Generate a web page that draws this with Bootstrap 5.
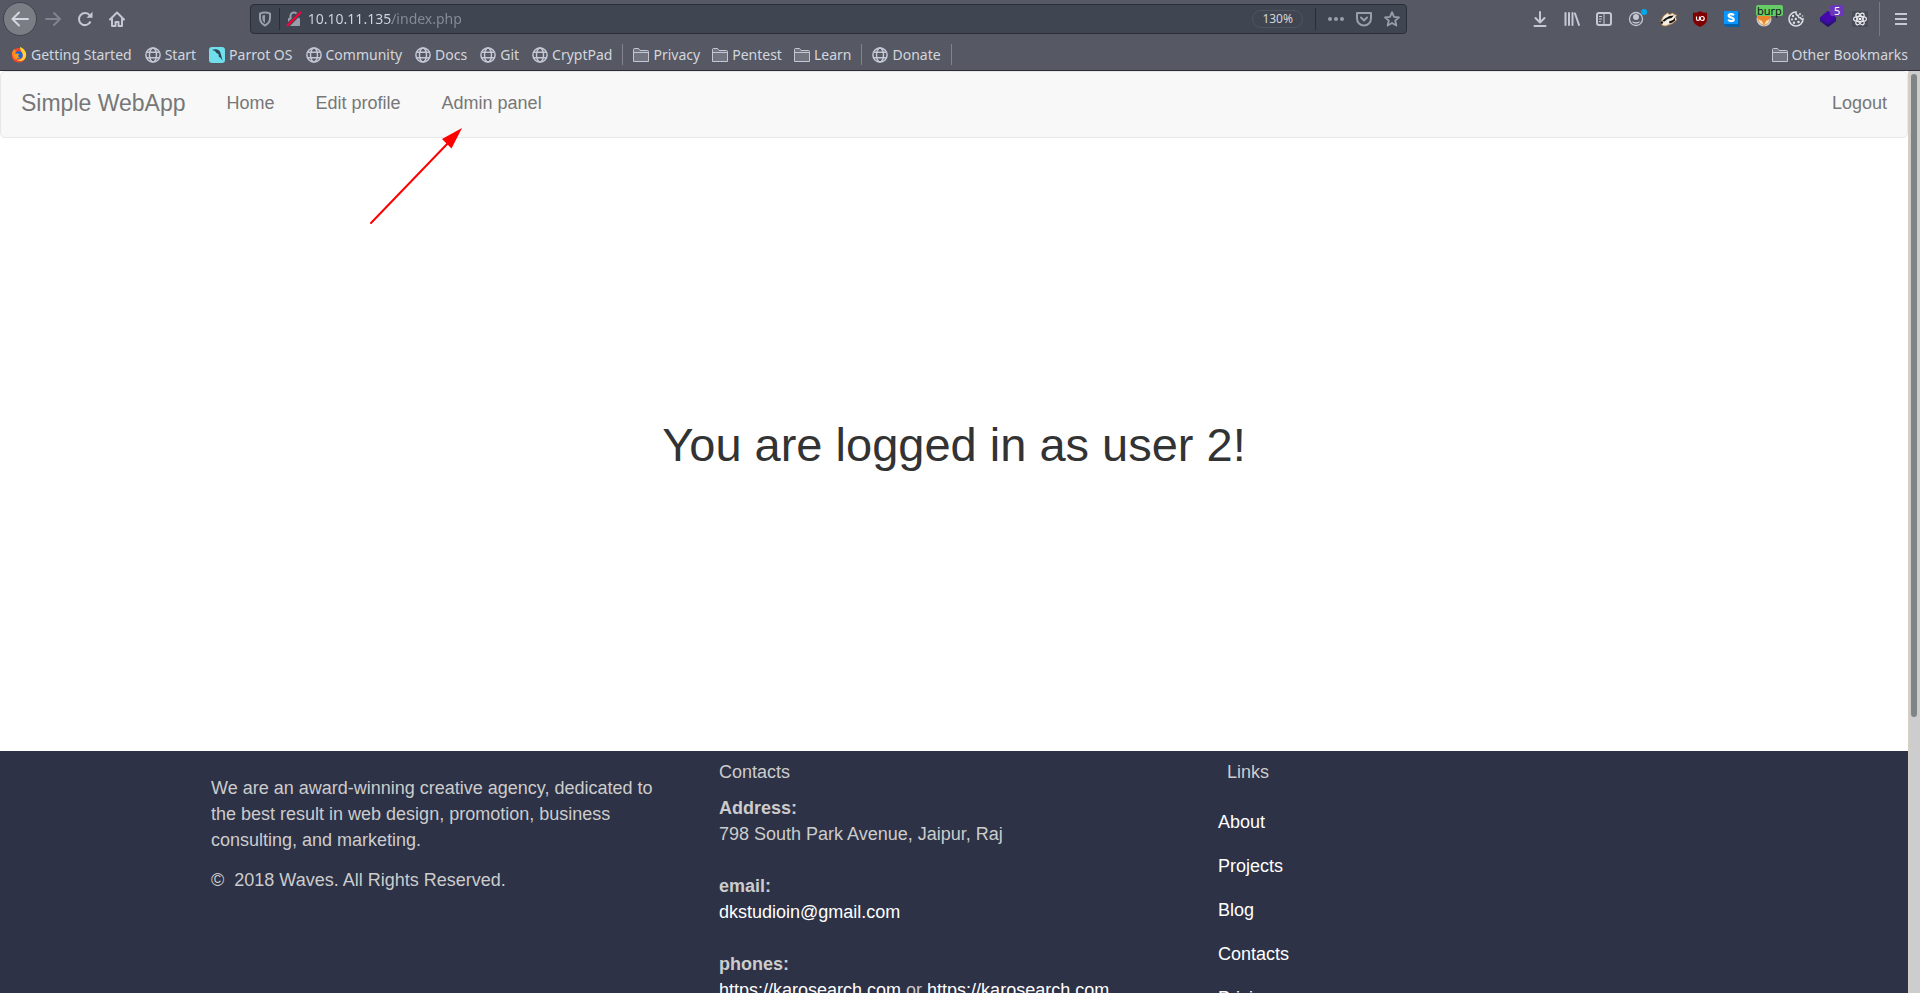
<!DOCTYPE html>
<html lang="en">
<head>
<meta charset="utf-8">
<meta name="viewport" content="width=device-width, initial-scale=1">
<title>Simple WebApp</title>
<link href="https://cdn.jsdelivr.net/npm/bootstrap@5.3.0/dist/css/bootstrap.min.css" rel="stylesheet">
<style>
  body { font-family: "Liberation Sans", Arial, sans-serif; font-size: 18px; line-height: 26px; color: #333; }
  a { text-decoration: none; }
  svg { display: block; flex: none; }

  /* browser toolbar */
  .chrome { background: #565964; border-bottom: 1px solid #2b2e39; font-family: "Noto Sans", sans-serif; font-size: 14px; line-height: 20px; color: #d3d6de; }
  .toolbar-row { height: 39px; padding: 0 3px 1px; }
  .tool { width: 32px; height: 32px; padding: 0; border: 0; background: none; color: #c4c8d4; display: flex; align-items: center; justify-content: center; position: relative; flex: none; }
  .tool-back { width: 34px; height: 34px; background: #7b7d85; border: 1px solid #41444e; border-radius: 50%; }
  .tool-off { color: #81848e; }
  .gap-flex { flex: 117 1 0; }
  .urlbar { flex: 1157 1 0; height: 30px; min-width: 0; background: #404552; border: 1px solid #2b2e39; border-radius: 4px; color: #9a9eaa; }
  .urlbar .tool { width: 28px; height: 28px; color: #9a9eaa; }
  .url-sep { width: 1px; height: 22px; background: #2b2e39; }
  .url-sep-end { margin: 0 6px 0 12px; }
  .url-input { font-size: 14px; border: 0; padding: 0; outline: 0; min-width: 0; color: transparent; background: linear-gradient(to right, #d3dae3 84px, #888c98 84px); -webkit-background-clip: text; background-clip: text; }
  .zoom-pill { font-size: 12px; line-height: 16px; color: #d3d6de; background: none; border: 1px solid #505461; border-radius: 9px; width: 51px; padding: 0; }
  .tag { position: absolute; font-size: 11px; line-height: 11px; border-radius: 2px; }
  .tag-burp { left: 8px; top: 2px; background: #66cc66; color: #111; padding: 0 1px; }
  .tag-five { left: 18px; top: 2px; background: #6c36b8; color: #fff; padding: 0 4px; }
  .menu-sep { width: 1px; height: 34px; background: #777a84; margin: 0 5px 0 3px; }
  .bookmarks { height: 31px; padding: 0 12px 0 11px; gap: 13px; }
  .bookmarks a { color: #d3d6de; display: flex; align-items: center; gap: 4px; white-space: nowrap; }
  .folders { display: flex; gap: 12px; }
  .mark-sep { width: 1px; height: 21px; background: #81848e; margin: 0 -3px; }

  /* page */
  .viewport-scroll { width: 12px; background: #cdcdcd; border-left: 1px solid #d8cfc4; padding: 3px 3px 0 2px; }
  .thumb { height: 70%; background: #7f8584; border-radius: 3px; }
  .app-nav { background: #f8f8f8; border: 1px solid #e7e7e7; border-radius: 5px; height: 67px; padding: 18px 20px; gap: 41px; align-items: flex-start; }
  .app-nav a { color: #777; }
  .app-nav .app-title { font-size: 23px; }
  .hero { padding: 280px 20px; }
  .hero h1 { font-size: 47px; line-height: 53px; font-weight: 400; margin: 0; color: #333; }
  .app-footer { background: #2d3246; color: #ccc; flex: 1 0 auto; }
  .app-footer a { color: #fff; }
  .foot-wrap { max-width: 1524px; margin: 0 auto; padding: 0; }
  .foot-row { --bs-gutter-x: 38px; margin: 0; }
  .about-col { padding-top: 24px; }
  .about-col p { margin: 0 0 14px; }
  .list-col { padding-top: 8px; }
  .list-col h2 { font-size: 18px; line-height: 26px; font-weight: 400; margin: 0 0 10px; }
  .list-col dl, .list-col dt, .list-col dd { margin: 0; }
  .list-col dd { margin-bottom: 26px; }
  .link-list { margin: 24px 0 0 -9px; padding: 0; list-style: none; display: grid; gap: 18px; }
  .pointer { position: absolute; left: 368px; top: 56px; }
</style>
</head>
<body>
<svg width="0" height="0" class="position-absolute" aria-hidden="true">
  <symbol id="globe" viewBox="0 0 16 16"><g fill="none" stroke="#c4c8d4" stroke-width="1.5"><circle cx="8" cy="8" r="7.1"/><ellipse cx="8" cy="8" rx="3.5" ry="7"/><path d="M1.8 5.3h12.4M1.8 10.7h12.4"/></g></symbol>
  <symbol id="folder" viewBox="0 0 16 16"><path d="M.5 14.5v-12q0-1 1-1h4l1.500 2h7.500q1 0 1 1v10z" fill="#72757f" stroke="#c4c8d4"/><path d="M.5 5.500h15" stroke="#c4c8d4"/></symbol>
</svg>
<div class="vh-100 d-flex flex-column overflow-hidden">
  <header class="chrome flex-shrink-0">
    <div class="toolbar-row d-flex align-items-center">
      <button class="tool tool-back" aria-label="Back"><svg width="18" height="18" viewBox="0 0 18 18" fill="none" stroke="#d3d7e0" stroke-width="2" stroke-linecap="round" stroke-linejoin="round"><path d="M17 9H2M8 2.500L1.500 9 8 15.500"/></svg></button>
      <button class="tool tool-off" aria-label="Forward"><svg width="16" height="16" viewBox="0 0 16 16" fill="none" stroke="currentColor" stroke-width="2" stroke-linecap="round" stroke-linejoin="round"><path d="M1 8h13M9 2l6 6-6 6"/></svg></button>
      <button class="tool" aria-label="Reload"><svg width="16" height="16" viewBox="0 0 16 16" fill="none" stroke="currentColor" stroke-width="2"><path d="M12.800 4.500A6 6 0 1 0 13.500 10.500"/><path d="M15.500 .8v6h-6z" fill="currentColor" stroke="none"/></svg></button>
      <button class="tool" aria-label="Home"><svg width="16" height="16" viewBox="0 0 16 16" fill="none" stroke="currentColor" stroke-width="2" stroke-linecap="round" stroke-linejoin="round"><path d="M1 8.500L8 1.500l7 7M3 8v7h3.500v-4h3v4H13V8"/></svg></button>
      <div class="gap-flex"></div>
      <div class="urlbar d-flex align-items-center">
        <button class="tool" aria-label="Tracking protection"><svg width="14" height="16" viewBox="0 0 14 16"><path d="M7 1.500c2 0 3.500.4 5 1.200V7c0 3.500-2 6-5 7.500C4 13 2 10.500 2 7V2.700C3.500 1.900 5 1.500 7 1.500z" fill="none" stroke="currentColor" stroke-width="2"/><path d="M7 4c-1 0-2 .2-2.700.5V7c0 2.300 1 3.800 2.700 5z" fill="currentColor"/></svg></button>
        <span class="url-sep"></span>
        <button class="tool" aria-label="Connection not secure"><svg width="16" height="16" viewBox="0 0 16 16"><path d="M4.500 8V5a3.500 3.500 0 0 1 7 0v3" fill="none" stroke="currentColor" stroke-width="2"/><rect x="2" y="7" width="12" height="8" rx="1" fill="currentColor"/><path d="M1.500 14.500L14.500 1.500" stroke="#404552" stroke-width="4"/><path d="M1.500 14.500L14.500 1.500" stroke="#ff0039" stroke-width="2" stroke-linecap="round"/></svg></button>
        <input class="url-input flex-grow-1" type="text" aria-label="Address" value="10.10.11.135/index.php">
        <button class="zoom-pill flex-shrink-0">130%</button>
        <span class="url-sep url-sep-end"></span>
        <button class="tool" aria-label="Page actions"><svg width="16" height="16" viewBox="0 0 16 16" fill="currentColor"><circle cx="2" cy="8" r="2"/><circle cx="8" cy="8" r="2"/><circle cx="14" cy="8" r="2"/></svg></button>
        <button class="tool" aria-label="Save to Pocket"><svg width="16" height="16" viewBox="0 0 16 16" fill="none" stroke="currentColor" stroke-width="2" stroke-linecap="round" stroke-linejoin="round"><path d="M1 2h14v5.500a7 7 0 0 1-14 0z"/><path d="M5 6.500l3 3 3-3"/></svg></button>
        <button class="tool" aria-label="Bookmark this page"><svg width="16" height="16" viewBox="0 0 16 16" fill="none" stroke="currentColor" stroke-width="1.800" stroke-linejoin="round"><path d="M8 1.200l2 4.600 5 .5-3.800 3.300 1.200 4.900L8 12l-4.400 2.500 1.200-4.900L1 6.300l5-.5z"/></svg></button>
      </div>
      <div class="gap-flex"></div>
      <button class="tool" aria-label="Downloads"><svg width="16" height="16" viewBox="0 0 16 16" fill="none" stroke="currentColor" stroke-width="2" stroke-linecap="round" stroke-linejoin="round"><path d="M8 1v10M3.500 7L8 11.500 12.500 7M2.500 15h11"/></svg></button>
      <button class="tool" aria-label="Library"><svg width="16" height="16" viewBox="0 0 16 16" fill="none" stroke="currentColor" stroke-width="2" stroke-linecap="round"><path d="M1.500 2v12M5 2v12M8.500 2v12M11 2.500L15 14"/></svg></button>
      <button class="tool" aria-label="Sidebars"><svg width="16" height="16" viewBox="0 0 16 16" fill="none" stroke="currentColor" stroke-width="2"><rect x="1" y="2" width="14" height="12" rx="2"/><path d="M8 2v12M3 5.500h3M3 8h3M3 10.500h2" stroke-width="1"/></svg></button>
      <button class="tool" aria-label="Account"><svg width="22" height="20" viewBox="-1 0 22 20"><circle cx="10" cy="10" r="6.500" fill="none" stroke="currentColor" stroke-width="1.300"/><circle cx="10" cy="8" r="3" fill="currentColor"/><path d="M5.500 12c2 1.500 7 1.500 9 0a5 5 0 0 1-9 0z" fill="currentColor"/><circle cx="18" cy="3" r="3" fill="#00a8f0"/></svg></button>
      <button class="tool" aria-label="Privacy Badger"><svg width="17" height="16" viewBox="0 0 17 16"><path d="M.5 11l3-6 4-3 2 1.500L13 2l1 1.500 2.500.5-1 2 1 3-4 3.500-7 2.500-3-.5z" fill="#f4eee3" stroke="#c8853e" stroke-width=".8"/><path d="M2 10l3-2.500 4.500-2.500L14 4.500l-2.500 2.500-4 1-3 2.500z" fill="#111"/><path d="M9 10.500l4-1.500 2-2.500v3l-2.500 2-3 1z" fill="#111"/><circle cx="1.800" cy="11.500" r="1.300" fill="#111"/></svg></button>
      <button class="tool" aria-label="uBlock Origin"><svg width="16" height="16" viewBox="0 0 16 16"><path d="M8 0c2 1.500 4.500 1.700 7 1.700v6.500c0 3.500-3 6-7 7.800-4-1.800-7-4.300-7-7.800V1.700C3.500 1.700 6 1.500 8 0z" fill="#800000"/><path d="M4.500 5.500V8q0 1.500 1.500 1.500T7.500 8V5.500" fill="none" stroke="#fff" stroke-width="1.200"/><circle cx="10.200" cy="7.500" r="2" fill="none" stroke="#fff" stroke-width="1.200"/></svg></button>
      <button class="tool" aria-label="Stylus"><svg width="16" height="16" viewBox="0 0 16 16"><path d="M0 0h14l2 2v14H2l-2-2z" fill="#0761a8"/><rect width="14" height="13" fill="#0a95ff"/><path d="M10 4.200C8.500 2.800 4.700 2.700 4.700 4.800c0 2.200 5 1.300 5 3.600 0 2.200-4 2-5.600.4" fill="none" stroke="#fff" stroke-width="2.200"/></svg></button>
      <button class="tool" aria-label="Burp proxy"><svg width="16" height="16" viewBox="0 0 16 16"><circle cx="8" cy="8" r="7.500" fill="#c4cdd8"/><path d="M1 4l3 1h8l3-1-1 6-3 3-3 2-3-2-3-3z" fill="#e8862c"/><path d="M2 8l4 2 2 4-4-2zM14 8l-4 2-2 4 4-2z" fill="#ffe0b5"/></svg><span class="tag tag-burp">burp</span></button>
      <button class="tool" aria-label="Cookie editor"><svg width="16" height="16" viewBox="0 0 16 16"><path d="M8 1a7 7 0 1 0 7 7c-1 .5-2.300 0-2.500-1.300C11 7 10 6 10.300 4.500 8.700 4.300 7.700 3 8 1z" fill="none" stroke="#dadce2" stroke-width="1.600"/><g fill="#dadce2"><circle cx="5" cy="5" r="1.200"/><circle cx="4" cy="8.500" r="1.100"/><circle cx="7.800" cy="8" r="1.200"/><circle cx="6" cy="11.800" r="1.200"/><circle cx="10.500" cy="11" r="1.300"/><circle cx="12" cy="3" r="1"/><circle cx="14.500" cy="5" r=".8"/></g></svg></button>
      <button class="tool" aria-label="Wappalyzer"><svg width="16" height="16" viewBox="0 0 16 16"><path d="M8 4.500l8 5.500-8 6-8-6z" fill="#1f0a62"/><path d="M0 6.500L8 0l8 6.500V10l-8 4.500L0 10z" fill="#32108c"/><path d="M8 0l8 6.500L8 12 0 6.500z" fill="#4608ad"/></svg><span class="tag tag-five">5</span></button>
      <button class="tool" aria-label="React developer tools"><svg width="16" height="16" viewBox="0 0 16 16"><path d="M0 0h16v16H0z" fill="#484c56"/><g fill="none" stroke="#e6e8ec" stroke-width="1.200"><ellipse cx="8" cy="8" rx="6.500" ry="2.600"/><ellipse cx="8" cy="8" rx="6.500" ry="2.600" transform="rotate(60 8 8)"/><ellipse cx="8" cy="8" rx="6.500" ry="2.600" transform="rotate(120 8 8)"/></g><circle cx="8" cy="8" r="1.300" fill="#fff"/></svg></button>
      <span class="menu-sep"></span>
      <button class="tool" aria-label="Open menu"><svg width="16" height="16" viewBox="0 0 16 16" stroke="currentColor" stroke-width="2"><path d="M2 3h12M2 8h12M2 13h12"/></svg></button>
    </div>
    <nav class="bookmarks d-flex align-items-center" aria-label="Bookmarks">
      <a href="#"><svg width="16" height="16" viewBox="0 0 16 16"><circle cx="8" cy="8.300" r="7.300" fill="#f5472f"/><path d="M9 0c5 2 7 6 5.800 10C13.500 14 9 15 6 13c5 0 7-3 5-7-.5-2-2-3-2-6z" fill="#ffd43a"/><path d="M1 7c0-2 1-4 2.500-5L5 4.500 9 6l2 3-3 4-5-1z" fill="#ff8a1c"/><circle cx="7.800" cy="8" r="3.800" fill="#1467d8"/><path d="M3 7l4-.5 1.500 1L6.500 9 9 10.500l-4 1z" fill="#ff9a20"/></svg>Getting Started</a>
      <a href="#"><svg width="16" height="16"><use href="#globe"/></svg>Start</a>
      <a href="#"><svg width="16" height="16" viewBox="0 0 16 16"><rect width="16" height="16" rx="3" fill="#70deec"/><path d="M3 3c4-1.500 7.500-.5 8.500 3l2 7.500-2.700-3.500-.8 .5L9.500 7 7.500 6 6 4z" fill="#2d4653"/></svg>Parrot OS</a>
      <a href="#"><svg width="16" height="16"><use href="#globe"/></svg>Community</a>
      <a href="#"><svg width="16" height="16"><use href="#globe"/></svg>Docs</a>
      <a href="#"><svg width="16" height="16"><use href="#globe"/></svg>Git</a>
      <a href="#"><svg width="16" height="16"><use href="#globe"/></svg>CryptPad</a>
      <span class="mark-sep"></span>
      <div class="folders">
        <a href="#"><svg width="16" height="16"><use href="#folder"/></svg>Privacy</a>
        <a href="#"><svg width="16" height="16"><use href="#folder"/></svg>Pentest</a>
        <a href="#"><svg width="16" height="16"><use href="#folder"/></svg>Learn</a>
      </div>
      <span class="mark-sep"></span>
      <a href="#"><svg width="16" height="16"><use href="#globe"/></svg>Donate</a>
      <span class="mark-sep"></span>
      <a class="ms-auto" href="#"><svg width="16" height="16"><use href="#folder"/></svg>Other Bookmarks</a>
    </nav>
  </header>
  <div class="d-flex flex-grow-1 overflow-hidden">
    <div class="flex-grow-1 d-flex flex-column overflow-hidden position-relative">
      <nav class="app-nav d-flex flex-shrink-0">
        <a class="app-title" href="#">Simple WebApp</a>
        <a href="#">Home</a>
        <a href="#">Edit profile</a>
        <a href="#">Admin panel</a>
        <a class="ms-auto" href="#">Logout</a>
      </nav>
      <main class="hero text-center flex-shrink-0"><h1>You are logged in as user 2!</h1></main>
      <footer class="app-footer">
        <div class="foot-wrap container-fluid">
          <div class="foot-row row">
            <div class="col-4 about-col">
              <p>We are an award-winning creative agency, dedicated to the best result in web design, promotion, business consulting, and marketing.</p>
              <p>©&nbsp; 2018 Waves. All Rights Reserved.</p>
            </div>
            <div class="col-4 list-col">
              <h2>Contacts</h2>
              <dl>
                <dt>Address:</dt><dd>798 South Park Avenue, Jaipur, Raj</dd>
                <dt>email:</dt><dd><a href="#">dkstudioin@gmail.com</a></dd>
                <dt>phones:</dt><dd><a href="#">https://karosearch.com</a> or <a href="#">https://karosearch.com</a></dd>
              </dl>
            </div>
            <div class="col-4 list-col">
              <h2>Links</h2>
              <ul class="link-list">
                <li><a href="#">About</a></li>
                <li><a href="#">Projects</a></li>
                <li><a href="#">Blog</a></li>
                <li><a href="#">Contacts</a></li>
                <li><a href="#">Pricing</a></li>
              </ul>
            </div>
          </div>
        </div>
      </footer>
      <svg class="pointer" width="96" height="100" viewBox="0 0 96 100" aria-hidden="true"><path d="M3 96L82 14" stroke="#f00" stroke-width="2" stroke-linecap="round"/><path d="M94 1L74 12l9.500 9.500z" fill="#f00"/></svg>
    </div>
    <div class="viewport-scroll flex-shrink-0"><div class="thumb"></div></div>
  </div>
</div>
<script src="https://cdn.jsdelivr.net/npm/bootstrap@5.3.0/dist/js/bootstrap.bundle.min.js"></script>
</body>
</html>
